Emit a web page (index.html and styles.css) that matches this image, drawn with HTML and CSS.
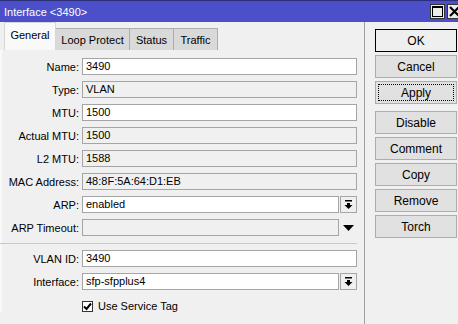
FILE: index.html
```html
<!DOCTYPE html>
<html lang="en">
<head>
    <meta charset="UTF-8">
    <title>Interface &lt;3490&gt;</title>
    <link rel="stylesheet" href="styles.css">
</head>
<body>

<div class="titlebar">
    <span class="title">Interface &lt;3490&gt;</span>
    <div class="win-buttons">
        <span class="win-btn">
            <svg width="11" height="11" viewBox="0 0 11 11"><rect x="0.5" y="0.5" width="10" height="10" fill="none" stroke="#000"/><rect x="0" y="0" width="11" height="2" fill="#000"/></svg>
        </span>
        <span class="win-btn">
            <svg width="11" height="11" viewBox="0 0 11 11"><path d="M1 1 L10 10 M10 1 L1 10" stroke="#000" stroke-width="2.2"/></svg>
        </span>
    </div>
</div>

<div class="window">
    <main class="main">
        <div class="tabs">
            <div class="tab active">General</div>
            <div class="tab">Loop Protect</div>
            <div class="tab">Status</div>
            <div class="tab">Traffic</div>
        </div>

        <form class="form">
            <label>Name:</label>
            <div class="input">3490</div>

            <label>Type:</label>
            <div class="input readonly">VLAN</div>

            <label>MTU:</label>
            <div class="input">1500</div>

            <label>Actual MTU:</label>
            <div class="input readonly">1500</div>

            <label>L2 MTU:</label>
            <div class="input readonly">1588</div>

            <label>MAC Address:</label>
            <div class="input readonly">48:8F:5A:64:D1:EB</div>

            <label>ARP:</label>
            <div class="combo">
                <div class="input">enabled</div>
                <span class="drop-btn">
                    <svg width="9" height="9" viewBox="0 0 9 9"><rect x="1" y="0" width="7" height="1.5" fill="#000"/><path d="M3 3 H6 V5 H8.5 L4.5 9 L0.5 5 H3 Z" fill="#000"/></svg>
                </span>
            </div>

            <label>ARP Timeout:</label>
            <div class="combo">
                <div class="input readonly"></div>
                <span class="drop-arrow">
                    <svg width="11" height="6" viewBox="0 0 11 6"><path d="M0 0 H11 L5.5 6 Z" fill="#000"/></svg>
                </span>
            </div>

            <hr class="separator">

            <label>VLAN ID:</label>
            <div class="input">3490</div>

            <label>Interface:</label>
            <div class="combo">
                <div class="input">sfp-sfpplus4</div>
                <span class="drop-btn">
                    <svg width="9" height="9" viewBox="0 0 9 9"><rect x="1" y="0" width="7" height="1.5" fill="#000"/><path d="M3 3 H6 V5 H8.5 L4.5 9 L0.5 5 H3 Z" fill="#000"/></svg>
                </span>
            </div>

            <span></span>
            <div class="check">
                <span class="checkbox">
                    <svg width="9" height="9" viewBox="0 0 9 9"><path d="M1 4.5 L3.5 7 L8 1.5" fill="none" stroke="#000" stroke-width="2"/></svg>
                </span>
                Use Service Tag
            </div>
        </form>
    </main>

    <aside class="side">
        <button type="button" class="default">OK</button>
        <button type="button">Cancel</button>
        <button type="button" class="focused"><span>Apply</span></button>
        <button type="button" class="group">Disable</button>
        <button type="button">Comment</button>
        <button type="button">Copy</button>
        <button type="button">Remove</button>
        <button type="button">Torch</button>
    </aside>
</div>

</body>
</html>
```

FILE: styles.css
```css
body {
    margin: 0;
    background: #f0f0f0;
    font-family: "Liberation Sans", Arial, sans-serif;
    font-size: 11px;
    color: #000;
    width: 458px;
    height: 324px;
    overflow: hidden;
}

.titlebar {
    height: 22px;
    box-sizing: border-box;
    background: #4b4fc9;
    border-top: 1px solid #2c2e7a;
    display: flex;
    align-items: center;
    justify-content: space-between;
    padding-left: 4px;
}

.title {
    color: #fff;
    font-size: 11px;
}

.win-buttons {
    display: flex;
    gap: 2px;
    margin-right: -4px;
}

.win-btn {
    width: 15px;
    height: 15px;
    box-sizing: border-box;
    background: #ececec;
    border: 1px solid #333;
    display: flex;
    align-items: center;
    justify-content: center;
}

.window {
    display: flex;
}

.main {
    width: 365px;
    height: 302px;
    box-sizing: border-box;
    border-right: 1px solid #a0a0a0;
}

.tabs {
    display: flex;
    align-items: flex-end;
    height: 28px;
    padding-left: 4px;
}

.tab {
    height: 22px;
    box-sizing: border-box;
    padding: 0;
    display: flex;
    align-items: center;
    justify-content: center;
    white-space: nowrap;
    background: #d9d9d9;
    border: 1px solid #adadad;
    border-bottom: none;
    margin-left: -1px;
    font-size: 11px;
}

.tab:nth-child(2) { width: 75px; }
.tab:nth-child(3) { width: 45px; }
.tab:nth-child(4) { width: 45px; }

.tab.active {
    width: 52px;
    height: 28px;
    margin-left: 0;
    background: #f9f9f9;
    border-color: #d6d6d6;
    position: relative;
    z-index: 1;
    padding-bottom: 3px;
}

.form {
    display: grid;
    grid-template-columns: 77px 1fr;
    column-gap: 3px;
    row-gap: 6px;
    align-items: center;
    padding: 8px 7px 0 0;
    border-left: 2px solid #f9f9f9;
}

.form label {
    text-align: right;
    white-space: nowrap;
}

.input {
    height: 17px;
    box-sizing: border-box;
    border: 1px solid #a5a5a5;
    background: #fff;
    padding: 0 3px;
    line-height: 15px;
    flex: 1;
}

.input.readonly {
    background: #f0f0f0;
}

.combo {
    display: flex;
    gap: 1px;
}

.drop-btn {
    width: 17px;
    height: 17px;
    box-sizing: border-box;
    border: 1px solid #a5a5a5;
    background: #f0f0f0;
    display: flex;
    align-items: center;
    justify-content: center;
}

.drop-arrow {
    width: 17px;
    height: 17px;
    display: flex;
    align-items: center;
    justify-content: center;
}

.separator {
    grid-column: 1 / 3;
    border: none;
    border-top: 1px solid #c8c8c8;
    margin: 1px 0 0 -2px;
}

.check {
    display: flex;
    align-items: center;
    gap: 5px;
    margin-top: 4px;
}

.checkbox {
    width: 11px;
    height: 11px;
    box-sizing: border-box;
    border: 1px solid #333;
    background: #fff;
    display: flex;
    align-items: center;
    justify-content: center;
}

.side {
    display: flex;
    flex-direction: column;
    gap: 3px;
    padding: 7px 0 0 10px;
}

button {
    width: 82px;
    height: 23px;
    box-sizing: border-box;
    background: #e1e1e1;
    border: 1px solid #adadad;
    font-family: "Liberation Sans", Arial, sans-serif;
    font-size: 12px;
    color: #000;
    padding: 0;
}

button.default {
    border-color: #000;
    background: #efefef;
}

button.focused {
    padding: 2px;
}

button.focused span {
    display: flex;
    align-items: center;
    justify-content: center;
    height: 100%;
    border: 1px dotted #000;
    box-sizing: border-box;
}

button.group {
    margin-top: 4px;
}
```
